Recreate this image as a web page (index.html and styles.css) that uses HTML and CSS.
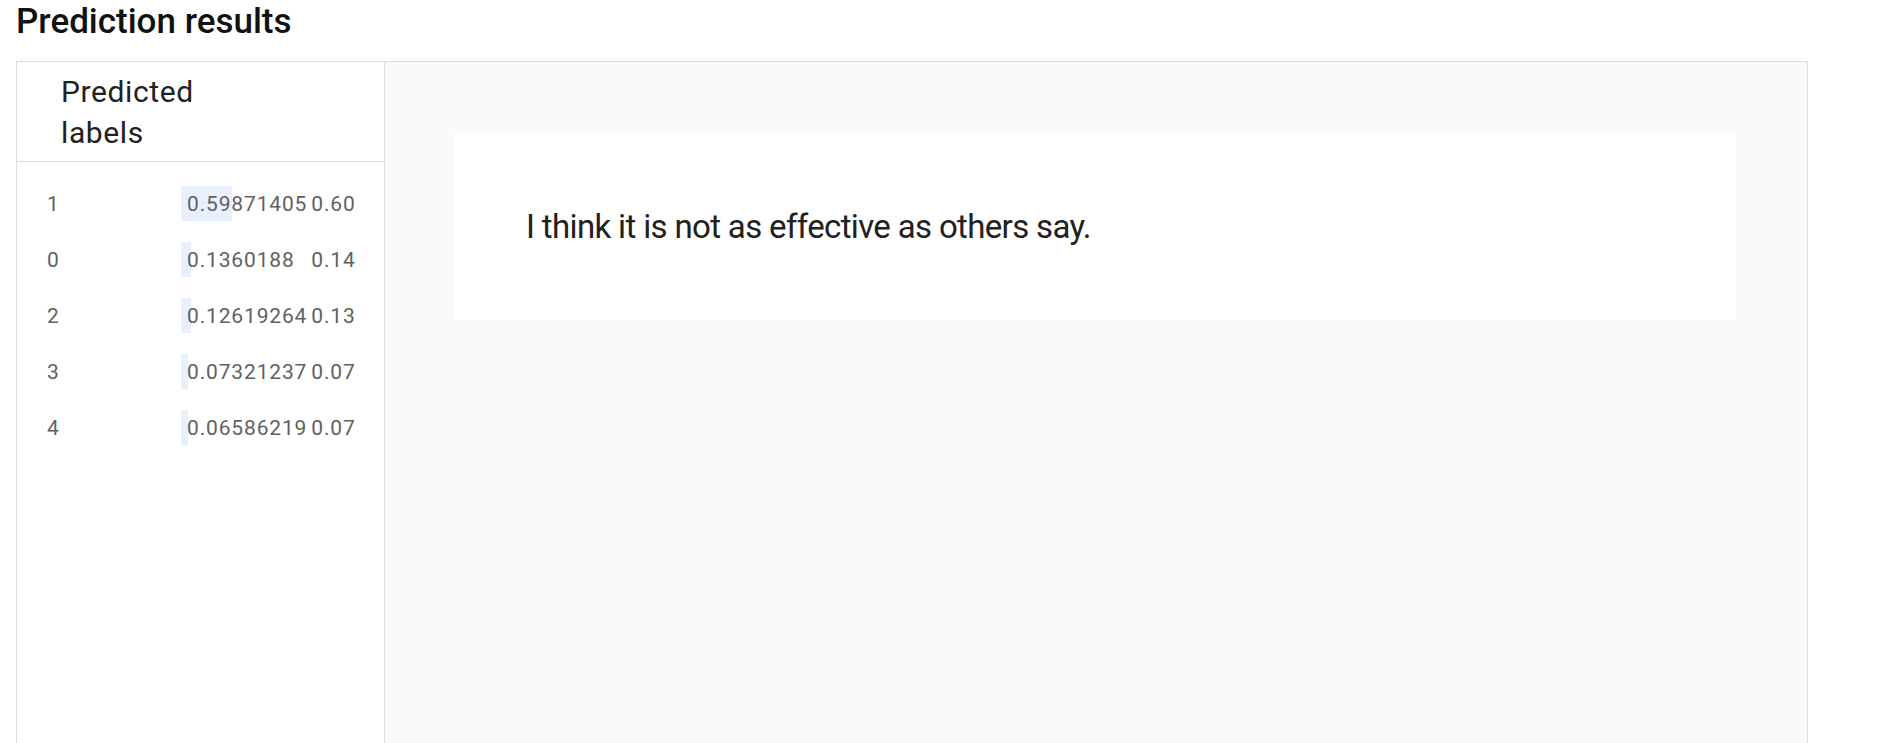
FILE: index.html
```html
<!DOCTYPE html>
<html>
<head>
<meta charset="utf-8">
<link rel="stylesheet" href="styles.css">
</head>
<body>
<div class="page">
  <h1 class="title">Prediction results</h1>
  <div class="panel">
    <div class="side">
      <div class="side-head"><span class="head-text">Predicted labels</span></div>
      <table class="preds">
        <tbody>
          <tr><td class="lbl">1</td><td class="score"><span class="bar" style="width:51px"></span><span class="num">0.59871405</span></td><td class="rnd">0.60</td></tr>
          <tr><td class="lbl">0</td><td class="score"><span class="bar" style="width:10px"></span><span class="num">0.1360188</span></td><td class="rnd">0.14</td></tr>
          <tr><td class="lbl">2</td><td class="score"><span class="bar" style="width:10px"></span><span class="num">0.12619264</span></td><td class="rnd">0.13</td></tr>
          <tr><td class="lbl">3</td><td class="score"><span class="bar" style="width:7px"></span><span class="num">0.07321237</span></td><td class="rnd">0.07</td></tr>
          <tr><td class="lbl">4</td><td class="score"><span class="bar" style="width:7px"></span><span class="num">0.06586219</span></td><td class="rnd">0.07</td></tr>
        </tbody>
      </table>
    </div>
    <div class="main">
      <div class="card">
        <p class="sentence">I think it is not as effective as others say.</p>
      </div>
    </div>
  </div>
</div>
</body>
</html>
```
FILE: styles.css
```css
html, body {
  margin: 0;
  padding: 0;
  background: #ffffff;
}
body {
  font-family: Roboto, "Liberation Sans", sans-serif;
  color: #212121;
}
.page {
  padding: 0 0 0 16px;
  width: 1792px;
}
.title {
  margin: 0;
  padding: 2px 0 19px 0;
  font-size: 35px;
  font-weight: 500;
  line-height: 40px;
  color: #111111;
}
.panel {
  display: flex;
  border: 1px solid #dcdcdc;
  height: 700px;
  box-sizing: border-box;
}
.side {
  width: 368px;
  flex: none;
  border-right: 1px solid #dcdcdc;
  background: #ffffff;
  box-sizing: border-box;
}
.side-head {
  padding: 9px 0 8px 44px;
  border-bottom: 1px solid #dcdcdc;
  font-size: 30px;
  line-height: 41px;
  letter-spacing: 0.6px;
  color: #212121;
}
.head-text {
  display: block;
  width: 150px;
}
.preds {
  border-collapse: collapse;
  margin-top: 14px;
  font-size: 21px;
  color: #616161;
}
.preds td {
  padding: 0;
  height: 56px;
  vertical-align: middle;
}
.lbl {
  width: 134px;
  padding-left: 30px !important;
}
.score {
  position: relative;
  padding-left: 6px !important;
  padding-right: 4px !important;
  white-space: nowrap;
}
.bar {
  position: absolute;
  left: 0;
  top: 10px;
  height: 35px;
  background: #e8f0fe;
}
.num {
  position: relative;
  letter-spacing: 0.85px;
}
.rnd {
  letter-spacing: 0.85px;
}
.main {
  flex: 1;
  background: #fafafa;
  padding: 71px 71px 0 69px;
}
.card {
  background: #ffffff;
  padding: 74px 72px 74px 72px;
}
.sentence {
  margin: 0;
  font-size: 33px;
  line-height: 39px;
  letter-spacing: -0.65px;
  color: #212121;
}
```
